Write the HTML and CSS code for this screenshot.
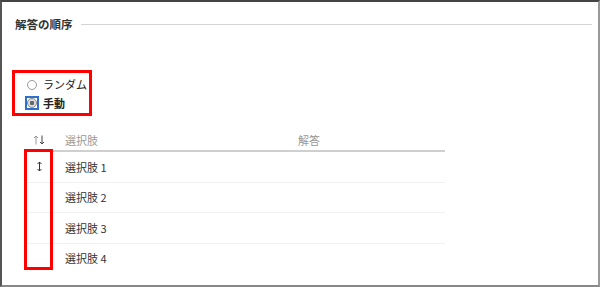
FILE: index.html
```html
<!DOCTYPE html>
<html lang="ja">
<head>
    <meta charset="UTF-8">
    <meta name="viewport" content="width=device-width, initial-scale=1.0">
    <title>解答の順序</title>
    <link rel="stylesheet" href="styles.css">
</head>
<body>

    <div class="frame">
        <div class="section-head">
            <h2 class="section-title">解答の順序</h2>
            <div class="section-line"></div>
        </div>

        <div class="order-options">
            <label class="option">
                <span class="radio"></span>
                <span class="option-text">ランダム</span>
            </label>
            <label class="option">
                <span class="radio-focus"><span class="radio checked"></span></span>
                <span class="option-text bold">手動</span>
            </label>
        </div>

        <div class="choice-table">
            <div class="table-row table-header">
                <div class="cell cell-icon">
                    <svg width="12" height="10" viewBox="0 0 12 10">
                        <path d="M3 9.5V1M1 3l2-2 2 2" fill="none" stroke="#999" stroke-width="1"/>
                        <path d="M9 0.5V9M7 7l2 2 2-2" fill="none" stroke="#444" stroke-width="1"/>
                    </svg>
                </div>
                <div class="cell cell-choice">選択肢</div>
                <div class="cell cell-answer">解答</div>
            </div>
            <div class="table-row">
                <div class="cell cell-icon">
                    <svg width="7" height="11" viewBox="0 0 7 11">
                        <path d="M3.5 1v9M1.5 3l2-2 2 2M1.5 8l2 2 2-2" fill="none" stroke="#333" stroke-width="1"/>
                    </svg>
                </div>
                <div class="cell cell-choice">選択肢 1</div>
                <div class="cell cell-answer"></div>
            </div>
            <div class="table-row">
                <div class="cell cell-icon"></div>
                <div class="cell cell-choice">選択肢 2</div>
                <div class="cell cell-answer"></div>
            </div>
            <div class="table-row">
                <div class="cell cell-icon"></div>
                <div class="cell cell-choice">選択肢 3</div>
                <div class="cell cell-answer"></div>
            </div>
            <div class="table-row last">
                <div class="cell cell-icon"></div>
                <div class="cell cell-choice">選択肢 4</div>
                <div class="cell cell-answer"></div>
            </div>

            <div class="handle-mark"></div>
        </div>
    </div>

</body>
</html>
```

FILE: styles.css
```css
body {
    margin: 0;
    background-color: #ffffff;
    font-family: "Noto Sans CJK JP", "Noto Sans", sans-serif;
    color: #333;
}

.frame {
    width: 600px;
    height: 287px;
    box-sizing: border-box;
    border-top: 2px solid #444;
    border-left: 2px solid #555;
    border-right: 2px solid #999;
    border-bottom: 2px solid #888;
    padding: 14px 6px 0 10px;
    overflow: hidden;
}

.section-head {
    display: flex;
    align-items: center;
    height: 16px;
    padding-left: 3px;
}

.section-title {
    margin: 0;
    font-size: 11.5px;
    line-height: 16px;
    font-weight: bold;
    color: #333;
}

.section-line {
    flex-grow: 1;
    height: 1px;
    background-color: #d4d4d4;
    margin-left: 8px;
}

.order-options {
    width: 80px;
    box-sizing: border-box;
    margin-top: 38px;
    border: 3px solid #ff0000;
    padding: 3px 0 1px 12px;
}

.option {
    display: flex;
    align-items: center;
    height: 18px;
}

.radio {
    width: 8px;
    height: 8px;
    border: 1px solid #999;
    border-radius: 50%;
    background-color: #fff;
    margin-right: 6px;
    box-sizing: content-box;
    flex-shrink: 0;
}

.radio-focus {
    display: flex;
    align-items: center;
    justify-content: center;
    width: 10px;
    height: 10px;
    border: 2px solid #2f6fd0;
    margin-left: -2px;
    margin-right: 4px;
}

.radio-focus .radio {
    margin-right: 0;
    background-color: #ddd;
    border-color: #888;
    background-image: radial-gradient(circle, #666 0, #666 2px, transparent 2.5px);
}

.option-text {
    font-size: 11px;
    line-height: 16px;
    color: #222;
    margin-top: -2px;
}

.option-text.bold {
    font-weight: bold;
    margin-top: 0;
}

.choice-table {
    position: relative;
    width: 420px;
    margin-top: 14px;
    margin-left: 13px;
}

.table-row {
    display: flex;
    height: 29.5px;
    border-bottom: 1px solid #f0f0f0;
    font-size: 11px;
}

.table-row.last {
    border-bottom: none;
}

.table-header {
    height: 20px;
    border-bottom: 2px solid #cfcfcf;
    color: #999;
}

.cell {
    display: flex;
    align-items: center;
}

.cell-icon {
    width: 28px;
    justify-content: center;
}

.cell-choice {
    width: 233px;
    padding-left: 12px;
    box-sizing: border-box;
}

.cell-answer {
    flex-grow: 1;
    padding-left: 12px;
}

.handle-mark {
    position: absolute;
    left: -1px;
    top: 19px;
    width: 29px;
    height: 121px;
    box-sizing: border-box;
    border: 3px solid #ff0000;
}
```
